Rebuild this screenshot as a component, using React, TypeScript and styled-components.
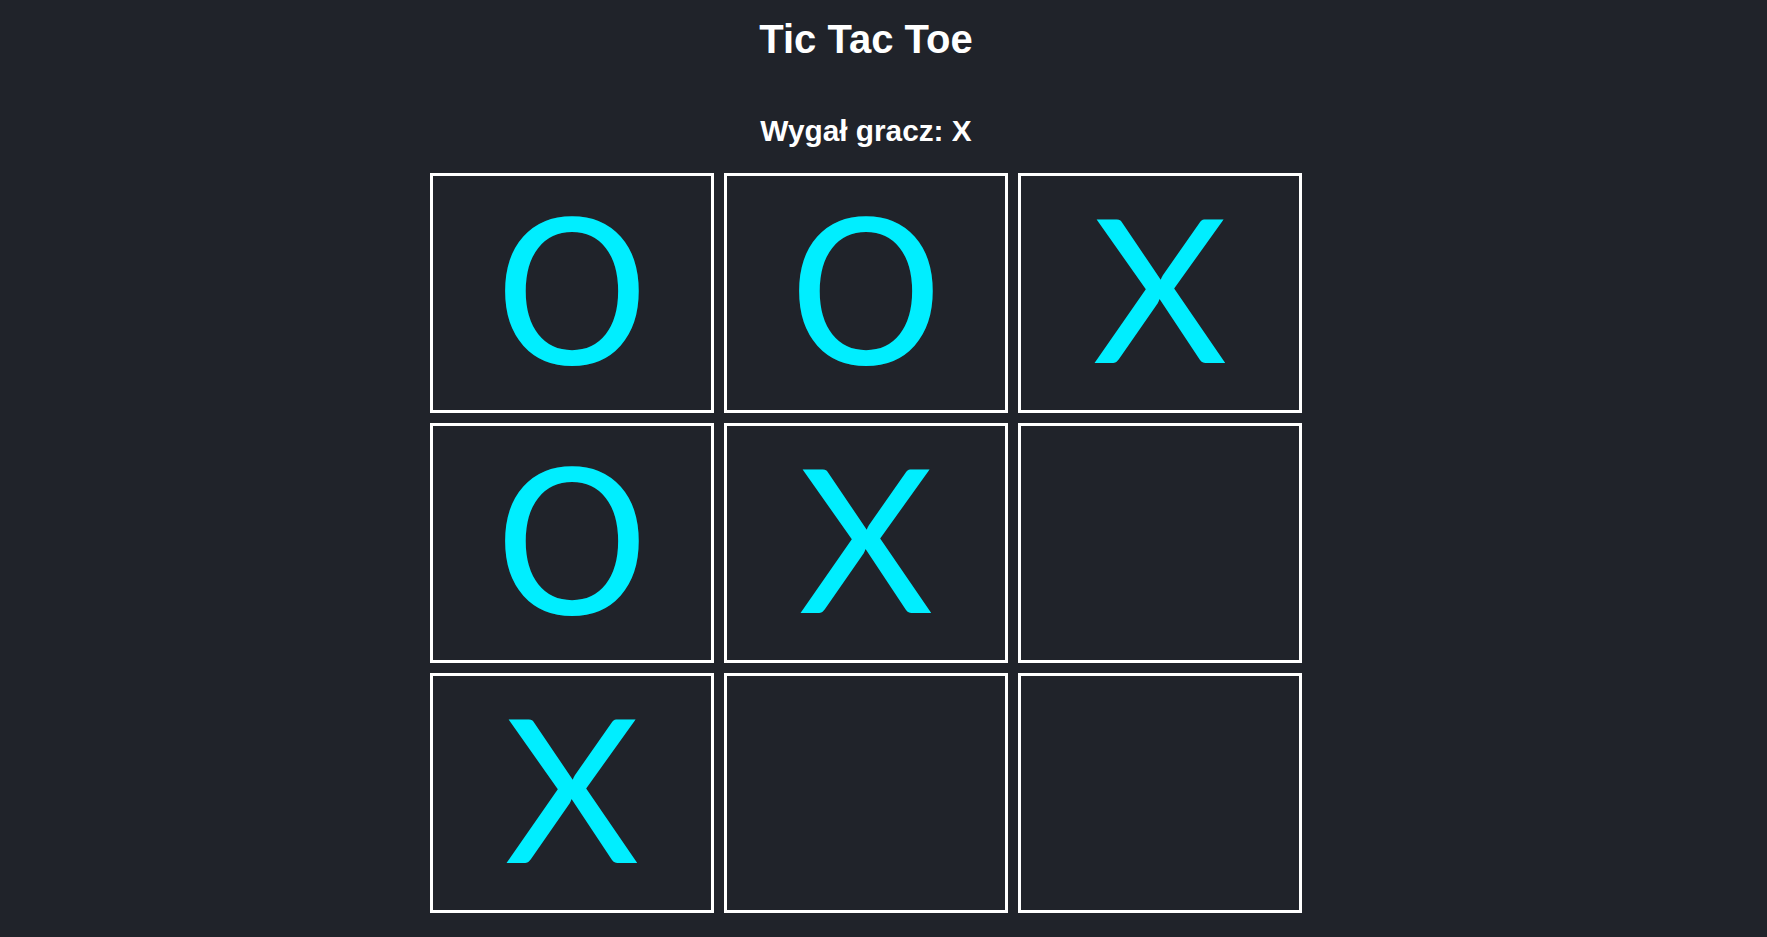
import React from "react";
import styled, { createGlobalStyle } from "styled-components";

const GlobalStyle = createGlobalStyle`
  html, body {
    margin: 0;
    padding: 0;
    background: #20232a;
  }
  body {
    font-family: "Liberation Sans", Arial, sans-serif;
    color: #ffffff;
  }
`;

const Page = styled.main`
  display: flex;
  flex-direction: column;
  align-items: center;
  padding-right: 35px;
  min-height: 937px;
  box-sizing: border-box;
`;

const Title = styled.h1`
  margin: 17px 0 0;
  font-size: 40px;
  font-weight: 700;
  line-height: normal;
  color: #ffffff;
`;

const Status = styled.h2`
  margin: 52px 0 0;
  font-size: 29.8px;
  font-weight: 700;
  line-height: normal;
  color: #ffffff;
`;

const Board = styled.div`
  margin-top: 25px;
  display: grid;
  grid-template-columns: repeat(3, 284px);
  grid-auto-rows: 240px;
  gap: 10px;
`;

const Cell = styled.button`
  box-sizing: border-box;
  display: flex;
  align-items: center;
  justify-content: center;
  padding: 0;
  background: #20232a;
  border: 3px solid #ffffff;
  cursor: pointer;
`;

type Player = "X" | "O";

const Mark = styled.span<{ $player: Player }>`
  display: block;
  color: #00eeff;
  font-weight: 400;
  line-height: 1;
  font-family: ${(p) => (p.$player === "O" ? '"DejaVu Sans", sans-serif' : "Lato, sans-serif")};
  font-size: ${(p) => (p.$player === "O" ? "198px" : "200px")};
  transform: ${(p) => (p.$player === "O" ? "translateY(2px)" : "translateY(-7px) scaleX(1.04)")};
`;

const board: (Player | null)[] = ["O", "O", "X", "O", "X", null, "X", null, null];

export default function App() {
  return (
    <>
      <GlobalStyle />
      <Page>
        <Title>Tic Tac Toe</Title>
        <Status>Wygał gracz: X</Status>
        <Board>
          {board.map((v, i) => (
            <Cell key={i}>{v && <Mark $player={v}>{v}</Mark>}</Cell>
          ))}
        </Board>
      </Page>
    </>
  );
}
